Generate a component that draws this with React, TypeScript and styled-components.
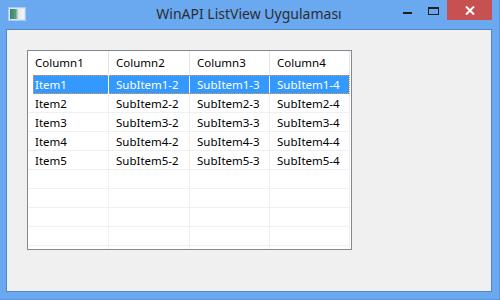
import React from 'react';
import styled, { createGlobalStyle } from 'styled-components';

const GlobalStyle = createGlobalStyle`
  html, body {
    margin: 0;
    padding: 0;
    background: #6aa8f0;
  }
  * {
    box-sizing: border-box;
  }
`;

const Window = styled.div`
  width: 500px;
  height: 300px;
  display: flex;
  flex-direction: column;
  background-color: #6aa8f0;
  border-right: 1px solid #5b95dc;
  border-bottom: 1px solid #5b95dc;
  padding: 0 7px 7px 6px;
  font-family: 'Noto Sans', 'Open Sans', sans-serif;
`;

const TitleBar = styled.div`
  height: 29px;
  display: grid;
  grid-template-columns: 1fr auto 1fr;
  align-items: start;
  margin-right: -7px;
  padding-right: 7px;
`;

const AppIcon = styled.div`
  margin: 8px 0 0 3px;
  width: 16px;
  height: 12px;
  background: linear-gradient(90deg, #3f7f76 0%, #5a9f7c 40%, #dfe8ec 60%, #f4f6f6 100%);
  border: 1px solid #dfe6ec;
  box-shadow: 0 0 0 1px rgba(255, 255, 255, 0.4);
`;

const Title = styled.div`
  margin-top: 4px;
  font-size: 14px;
  color: #2d2d30;
  white-space: nowrap;
`;

const Controls = styled.div`
  display: flex;
  justify-content: flex-end;
  align-items: flex-start;
`;

const CaptionButton = styled.div<{ $width: number; $close?: boolean }>`
  width: ${(p) => p.$width}px;
  height: 20px;
  display: flex;
  align-items: center;
  justify-content: center;
  background-color: ${(p) => (p.$close ? '#c75050' : 'transparent')};
`;

const MinGlyph = styled.div`
  width: 9px;
  height: 2px;
  margin-top: 5px;
  background: #1e1e1e;
`;

const MaxGlyph = styled.div`
  width: 11px;
  height: 8px;
  margin-top: 1px;
  border: 1px solid #1e1e1e;
  border-top-width: 2px;
`;

const Client = styled.div`
  flex: 1;
  background-color: #f0f0f0;
  border: 1px solid #5286c8;
  padding: 20px 0 0 20px;
`;

const ListView = styled.div`
  width: 325px;
  height: 200px;
  border: 1px solid #828790;
  background: #ffffff;
  overflow: hidden;
  font-size: 11.5px;
  color: #000000;
`;

const Row = styled.div<{ $height: number }>`
  display: grid;
  grid-template-columns: 81px 81px 80px 80px;
  height: ${(p) => p.$height}px;
`;

const Cell = styled.div<{ $header?: boolean }>`
  border-right: 1px solid ${(p) => (p.$header ? '#e5e5e5' : '#f0f0f0')};
  border-bottom: 1px solid ${(p) => (p.$header ? 'transparent' : '#f0f0f0')};
  padding-left: 7px;
  display: flex;
  align-items: center;
  white-space: nowrap;
  overflow: hidden;
`;

const SelectedRow = styled.div`
  display: grid;
  grid-template-columns: 76px 81px 80px 80px;
  height: 19px;
  margin-left: 5px;
  width: 317px;
  background: #3399ff;
  color: #ffffff;
  outline: 1px dotted #f09a3c;
  outline-offset: -1px;
`;

const SelectedCell = styled.div`
  border-right: 1px solid #ffffff;
  display: flex;
  align-items: center;
  white-space: nowrap;
  overflow: hidden;
  &:first-child {
    padding-left: 2px;
  }
  &:not(:first-child) {
    padding-left: 7px;
  }
`;

const columns = ['Column1', 'Column2', 'Column3', 'Column4'];

const items = [1, 2, 3, 4, 5].map((n) => [
  `Item${n}`,
  `SubItem${n}-2`,
  `SubItem${n}-3`,
  `SubItem${n}-4`,
]);

const App = () => {
  return (
    <>
      <GlobalStyle />
      <Window>
        <TitleBar>
          <AppIcon />
          <Title>WinAPI ListView Uygulaması</Title>
          <Controls>
            <CaptionButton $width={26}>
              <MinGlyph />
            </CaptionButton>
            <CaptionButton $width={27}>
              <MaxGlyph />
            </CaptionButton>
            <CaptionButton $width={45} $close>
              <svg width="10" height="9" viewBox="0 0 10 9">
                <path d="M1 0.5 L9 8.5 M9 0.5 L1 8.5" stroke="#ffffff" strokeWidth="2" />
              </svg>
            </CaptionButton>
          </Controls>
        </TitleBar>
        <Client>
          <ListView>
            <Row $height={24}>
              {columns.map((c) => (
                <Cell key={c} $header>
                  {c}
                </Cell>
              ))}
            </Row>
            {items.map((row, i) =>
              i === 0 ? (
                <SelectedRow key={i}>
                  {row.map((t) => (
                    <SelectedCell key={t}>{t}</SelectedCell>
                  ))}
                </SelectedRow>
              ) : (
                <Row key={i} $height={19}>
                  {row.map((t) => (
                    <Cell key={t}>{t}</Cell>
                  ))}
                </Row>
              )
            )}
            {[0, 1, 2, 3, 4].map((i) => (
              <Row key={`e${i}`} $height={19}>
                {columns.map((c) => (
                  <Cell key={c} />
                ))}
              </Row>
            ))}
          </ListView>
        </Client>
      </Window>
    </>
  );
};

export default App;
